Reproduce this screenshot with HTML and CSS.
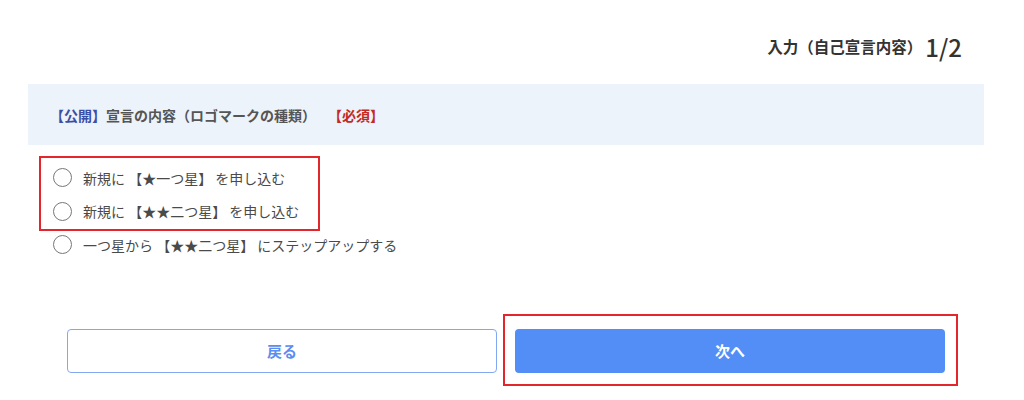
FILE: index.html
```html
<!DOCTYPE html>
<html lang="ja">
<head>
  <meta charset="UTF-8" />
  <title>自己宣言 入力</title>
  <link rel="stylesheet" href="styles.css">
</head>
<body>
  <div class="page">
    <div class="step-head">
      <span class="step-label">入力（自己宣言内容）</span><span class="step-num">1/2</span>
    </div>

    <div class="question">
      <span class="tag-public">【公開】</span>宣言の内容（ロゴマークの種類）<span class="tag-required">【必須】</span>
    </div>

    <div class="choices">
      <div class="mark mark-choices"></div>
      <label class="choice"><span class="radio"></span>新規に 【★一つ星】 を申し込む</label>
      <label class="choice"><span class="radio"></span>新規に 【★★二つ星】 を申し込む</label>
      <label class="choice"><span class="radio"></span>一つ星から 【★★二つ星】 にステップアップする</label>
    </div>

    <div class="actions">
      <div class="btn-wrap">
        <button class="btn btn-back">戻る</button>
      </div>
      <div class="btn-wrap">
        <button class="btn btn-next">次へ</button>
        <div class="mark mark-next"></div>
      </div>
    </div>
  </div>
</body>
</html>
```

FILE: styles.css
```css
body {
  margin: 0;
  background: #fff;
  font-family: "Noto Sans CJK JP", "Noto Sans", sans-serif;
  color: #444;
}

.page {
  width: 956px;
  margin-left: 28px;
  min-height: 400px;
}

.step-head {
  height: 84px;
  padding: 8px 22px 0 0;
  box-sizing: border-box;
  display: flex;
  justify-content: flex-end;
  align-items: center;
  color: #333;
}

.step-label {
  font-size: 15.5px;
  font-weight: bold;
}

.step-num {
  font-size: 24px;
  font-weight: 500;
  margin-left: 3px;
}

.question {
  height: 61px;
  background: #ecf3fb;
  display: flex;
  align-items: center;
  padding-left: 22px;
  font-size: 14px;
  font-weight: bold;
  color: #555;
}

.tag-public { color: #3d4fa5; }
.tag-required { color: #c42a22; margin-left: 12px; }

.choices {
  position: relative;
  margin-top: 16px;
  padding-left: 25px;
}

.choice {
  height: 33.5px;
  display: flex;
  align-items: center;
  gap: 11px;
  font-size: 14px;
  color: #4a4a4a;
}

.radio {
  width: 17px;
  height: 17px;
  border: 1.5px solid #777;
  border-radius: 50%;
  flex: none;
}

.mark {
  position: absolute;
  border: 2px solid #e3262b;
  box-sizing: border-box;
}

.mark-choices {
  left: 11px;
  top: -5px;
  width: 281px;
  height: 75px;
}

.actions {
  display: flex;
  gap: 18px;
  padding: 0 39px;
  margin-top: 67px;
}

.btn-wrap {
  position: relative;
  flex: 1 1 0;
  display: flex;
}

.btn {
  flex: 1;
  height: 44px;
  border-radius: 4px;
  font-family: inherit;
  font-size: 15px;
  font-weight: bold;
}

.btn-back {
  background: #fff;
  border: 1px solid #82a8f3;
  color: #5b8ef0;
}

.btn-next {
  background: #528ef5;
  border: none;
  color: #fff;
}

.mark-next {
  left: -12px;
  top: -15px;
  right: -13px;
  bottom: -13px;
}
```
